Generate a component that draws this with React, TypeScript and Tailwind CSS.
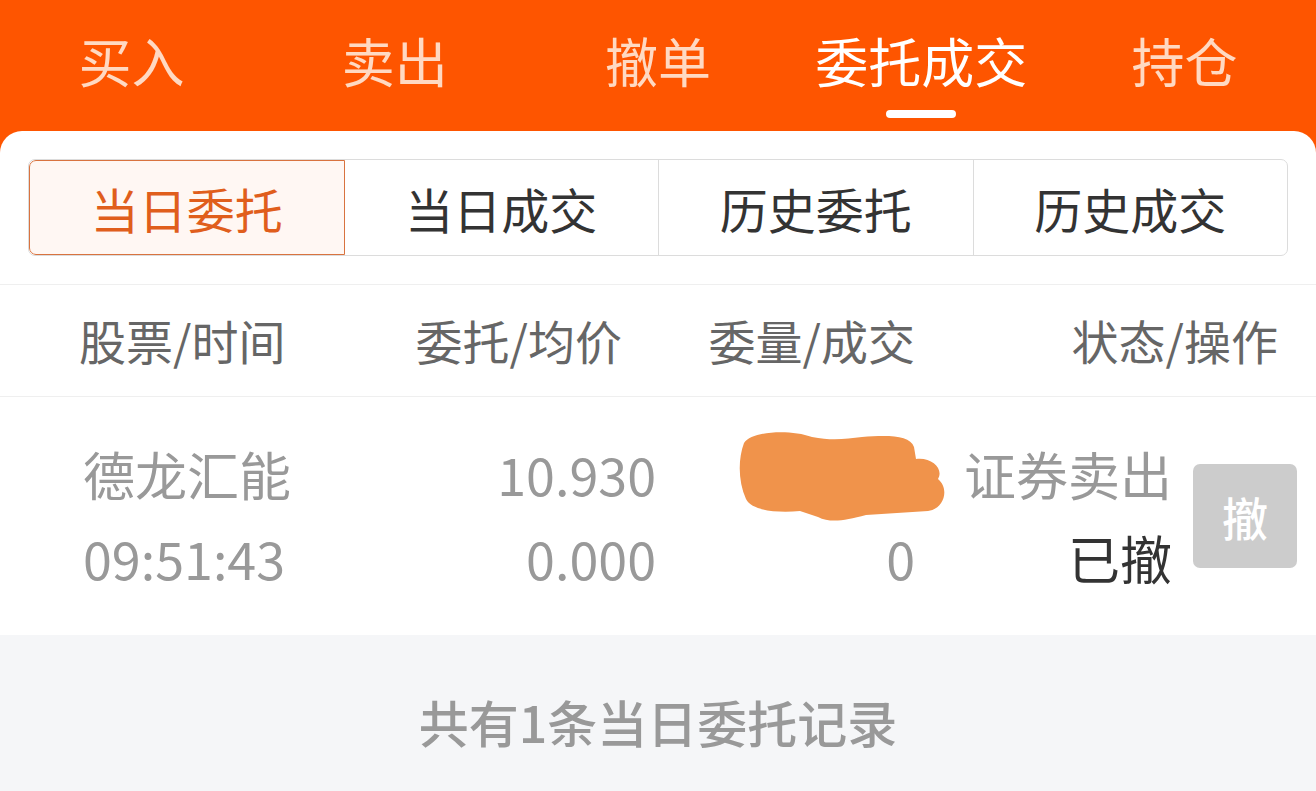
import React from "react";

const topTabs = ["买入", "卖出", "撤单", "委托成交", "持仓"];
const segments = ["当日委托", "当日成交", "历史委托", "历史成交"];

function Scribble() {
  return (
    <svg width="212" height="94" viewBox="0 0 212 94" className="absolute left-[738px] top-[32px]">
      <path
        d="M6 14 C14 2 52 0 74 8 C94 12 108 10 124 8 C150 6 172 6 176 18 L178 30 C194 28 206 40 200 50 C212 60 206 80 190 82 L128 86 C106 92 92 94 80 88 L62 82 C40 84 14 82 8 70 C0 52 0 30 6 14 Z"
        fill="#f0934b"
      />
    </svg>
  );
}

export default function App() {
  return (
    <div className="min-h-[791px] bg-[#fe5500] font-['Noto_Sans_CJK_SC',sans-serif]">
      <div className="grid h-[131px] grid-cols-5">
        {topTabs.map((tab) => {
          const active = tab === "委托成交";
          return (
            <div key={tab} className="flex flex-col items-center pt-[30px]">
              <span className={`text-[53px] leading-[60px] ${active ? "text-white" : "text-[#ffd9c2]"}`}>{tab}</span>
              {active && <span className="mt-[20px] h-[8px] w-[70px] rounded-full bg-white" />}
            </div>
          );
        })}
      </div>

      <div className="flex min-h-[660px] flex-col overflow-hidden rounded-t-[22px] bg-white">
        <div className="px-[28px] pt-[28px] pb-[28px]">
          <div className="flex h-[97px] overflow-hidden rounded-[7px] border border-[#dcdcdc]">
            {segments.map((seg, i) => {
              const active = i === 0;
              return (
                <div
                  key={seg}
                  className={`flex flex-1 items-center justify-center text-[48px] ${
                    active
                      ? "rounded-l-[7px] border border-[#d9733f] bg-[#fff7f3] text-[#e05e1c]"
                      : "border-l border-[#dcdcdc] text-[#333333]"
                  } ${i === 1 ? "border-l-0" : ""}`}
                >
                  {seg}
                </div>
              );
            })}
          </div>
        </div>

        <div className="flex h-[113px] items-center border-y border-[#efefef] text-[47px] text-[#666666]">
          <div className="w-[300px] pl-[79px]">股票/时间</div>
          <div className="w-[322px] text-right">委托/均价</div>
          <div className="w-[293px] text-right">委量/成交</div>
          <div className="flex-1 pr-[38px] text-right">状态/操作</div>
        </div>

        <div className="relative flex h-[238px] items-center text-[52px] leading-[84px]">
          <div className="w-[300px] pl-[83px] text-[#999999]">
            <div>德龙汇能</div>
            <div>09:51:43</div>
          </div>
          <div className="w-[356px] text-right text-[#999999]">
            <div>10.930</div>
            <div>0.000</div>
          </div>
          <div className="w-[259px] text-right text-[#999999]">
            <div>&nbsp;</div>
            <div>0</div>
          </div>
          <div className="w-[257px] text-right">
            <div className="text-[#999999]">证券卖出</div>
            <div className="text-[#333333]">已撤</div>
          </div>
          <div className="ml-[21px] flex h-[104px] w-[104px] items-center justify-center rounded-[7px] bg-[#cccccc] text-[46px] font-medium text-white">
            撤
          </div>
          <Scribble />
        </div>

        <div className="flex flex-1 justify-center bg-[#f5f6f8] pt-[57px]">
          <span className="text-[50px] font-medium leading-[58px] text-[#999999]">共有1条当日委托记录</span>
        </div>
      </div>
    </div>
  );
}
